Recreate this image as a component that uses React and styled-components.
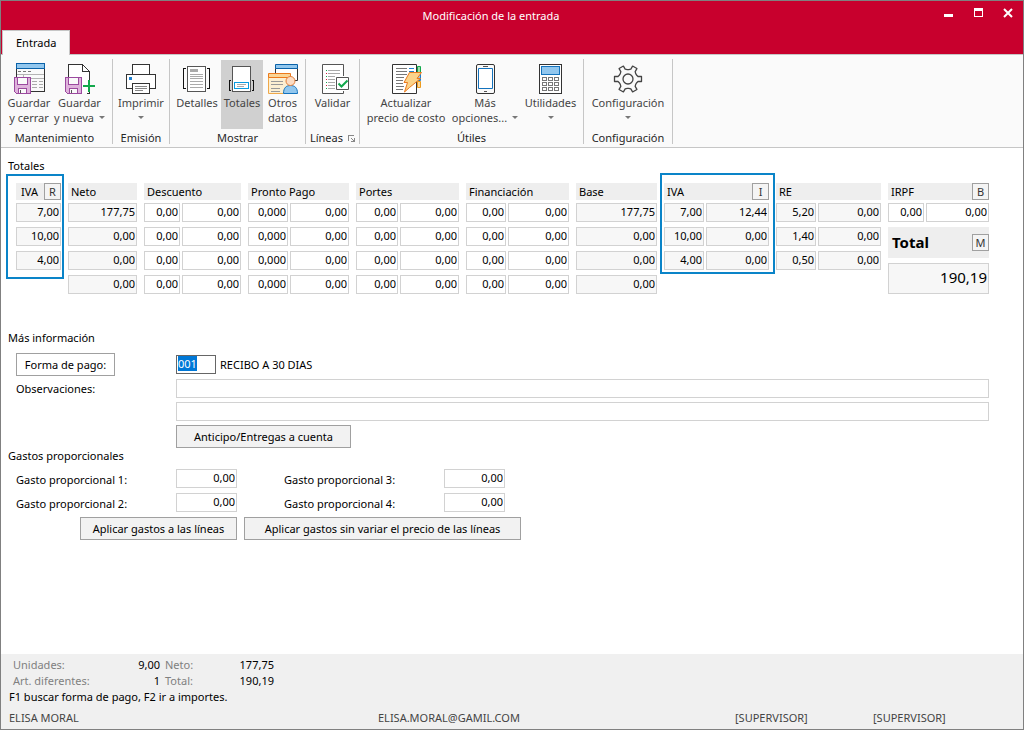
import React, { useEffect, useRef } from "react";
import styled, { createGlobalStyle, css } from "styled-components";

const Global = createGlobalStyle`
  * { box-sizing: border-box; }
  html, body { margin: 0; }
  body, button, input {
    font-family: "Noto Sans", "Open Sans", sans-serif;
    font-size: 11px;
    line-height: 15px;
    color: #000;
  }
  button, input { margin: 0; border-radius: 0; }
`;

const Window = styled.div`
  display: flex;
  flex-direction: column;
  min-height: 100vh;
  border: 1px solid #808080;
  background: #fff;
`;

/* ---------- title bar and tabs ---------- */

const TitleBar = styled.header`
  display: grid;
  align-items: center;
  height: 29px;
  background: #c8002d;
  color: #fff;
`;

const Title = styled.h1`
  grid-area: 1 / 1;
  justify-self: center;
  margin: 0 42px 0 0;
  font-size: 11px;
  font-weight: 400;
`;

const WindowButtons = styled.div`
  grid-area: 1 / 1;
  place-self: start end;
  display: flex;
`;

const WindowButton = styled.button`
  width: 30px;
  height: 24px;
  padding: 0;
  border: 0;
  background: none;
  svg { display: block; margin: 0 auto; }
`;

const TabStrip = styled.nav`
  display: flex;
  height: 25px;
  padding-left: 1px;
  background: #c8002d;
  border-bottom: 1px solid #c6c6c6;
`;

const Tab = styled.button`
  height: 25px;
  padding: 0 13px 2px;
  border: 1px solid #c6c6c6;
  border-bottom: 0;
  background: #fafafa;
`;

/* ---------- ribbon ---------- */

const Ribbon = styled.div`
  display: flex;
  height: 93px;
  padding: 4px 0 3px;
  background: #fafafa;
  border-bottom: 1px solid #c6c6c6;
`;

const RibbonGroup = styled.section`
  display: flex;
  flex-direction: column;
  justify-content: space-between;
  padding: 1px ${(p) => p.$end || 3}px 0 3px;
  border-right: 1px solid #c6c6c6;
`;

const RibbonItems = styled.div`
  display: flex;
`;

const GroupLabel = styled.h2`
  display: flex;
  align-items: center;
  justify-content: center;
  gap: 5px;
  margin: 0;
  font-size: 11px;
  font-weight: 400;
  line-height: 12px;
  color: #262626;
`;

const RibbonButton = styled.button`
  display: flex;
  flex-direction: column;
  align-items: center;
  width: ${(p) => p.$width}px;
  height: 69px;
  padding: 3px 0 0;
  border: 0;
  background: ${(p) => (p.$active ? "#d0d0d0" : "transparent")};
  color: #444;
  white-space: nowrap;
  svg { flex: none; }
`;

const ButtonLine = styled.span`
  display: flex;
  align-items: center;
  gap: 5px;
  height: 15px;
`;

const Caret = styled.i`
  border: 3px solid transparent;
  border-top-color: #777;
  border-bottom: 0;
`;

/* ---------- form ---------- */

const Content = styled.main`
  flex: 1;
  padding: 10px 34px 16px 7px;
`;

const SectionTitle = styled.h2`
  margin: 0;
  font-size: 11px;
  font-weight: 400;
  line-height: 15px;
`;

const TotalsGrid = styled.div`
  display: grid;
  grid-template-columns: 45fr 69fr 97fr 101fr 103fr 103fr 81fr 105fr 105fr 101fr;
  gap: 7px;
  align-items: start;
  padding: 10px 0 0 8px;
`;

const TotalsColumn = styled.div`
  position: relative;
  display: flex;
  flex-direction: column;
  gap: 5px;
  min-width: 0;
  ${(p) =>
    p.$frame &&
    css`
      &::after {
        content: "";
        position: absolute;
        inset: ${p.$frame};
        border: 2px solid #0a84c8;
        pointer-events: none;
      }
    `}
`;

const ColumnHeader = styled.div`
  display: flex;
  align-items: center;
  justify-content: space-between;
  height: 17px;
  margin-bottom: -2px;
  padding-left: ${(p) => p.$indent || 3}px;
  background: #eee;
`;

const KeyButton = styled.button`
  width: 17px;
  height: 17px;
  padding: 0;
  border: 1px solid #a0a0a0;
  background: #f4f4f4;
  line-height: 13px;
  color: #333;
`;

const CellRow = styled.div`
  display: flex;
  gap: 2px;
`;

const Field = styled.input`
  min-width: 0;
  width: ${(p) => (p.$width ? `${p.$width}px` : "auto")};
  flex: ${(p) => (p.$width ? "none" : "1 1 0")};
  height: 19px;
  padding: 0 1px 2px;
  border: 1px solid ${(p) => (p.$strong ? "#666" : "#d2d2d2")};
  outline: 0;
  background: ${(p) => (p.readOnly ? "#f7f7f7" : "#fff")};
  text-align: ${(p) => (p.$left ? "left" : "right")};
  &::selection { background: #0078d7; color: #fff; }
`;

const GrandTotal = styled.div`
  display: flex;
  align-items: center;
  justify-content: space-between;
  height: 31px;
  padding-left: 4px;
  background: #eee;
  font-size: 15px;
  font-weight: 700;
`;

const GrandField = styled(Field)`
  flex: none;
  width: 100%;
  height: 31px;
  padding-bottom: 4px;
  font-size: 15px;
`;

const FormRow = styled.div`
  display: grid;
  grid-template-columns: 160px 1fr;
  align-items: ${(p) => (p.$notes ? "start" : "center")};
  min-height: 20px;
  padding-left: 8px;
  label { line-height: 20px; }
`;

const InfoBlock = styled.section`
  padding-top: 36px;
`;

const InfoRows = styled.div`
  display: flex;
  flex-direction: column;
  gap: 3px;
  padding-top: 8px;
`;

const Inline = styled.div`
  display: flex;
  align-items: center;
  gap: 4px;
`;

const PushButton = styled.button`
  justify-self: start;
  width: ${(p) => p.$width}px;
  height: 23px;
  padding: 0;
  border: 1px solid #a0a0a0;
  background: ${(p) => (p.$plain ? "#fff" : "#f2f2f2")};
`;

const ExpenseGrid = styled.div`
  display: grid;
  grid-template-columns: 160px 61px 207px 61px;
  align-items: center;
  row-gap: 5px;
  padding: 6px 0 5px 8px;
`;

const ExpenseLabel = styled.label`
  padding: 2px 0 0 ${(p) => (p.$second ? 47 : 0)}px;
  white-space: nowrap;
`;

const ExpenseActions = styled.div`
  display: flex;
  gap: 7px;
  padding-left: 72px;
`;

/* ---------- status bar ---------- */

const StatusBar = styled.footer`
  padding: 3px 8px 3px;
  background: #f0f0f0;
`;

const Summary = styled.dl`
  display: grid;
  grid-template-columns: 80px 67px 60px 54px;
  margin: 0;
  padding-left: 4px;
  line-height: 16px;
  white-space: nowrap;
  dt { color: #808080; }
  dd { margin: 0; text-align: right; }
  dt:nth-of-type(even) { padding-left: 5px; }
`;

const Hint = styled.p`
  margin: 0;
  line-height: 16px;
`;

const UserLine = styled.div`
  display: grid;
  grid-template-columns: 369fr 357fr 138fr 142fr;
  padding-top: 5px;
  line-height: 16px;
  color: #444;
`;

/* ---------- icons ---------- */

const Icon = ({ children, crisp = true }) => (
  <svg width="32" height="32" viewBox="0 0 32 32" fill="none" aria-hidden="true"
    shapeRendering={crisp ? "crispEdges" : "auto"}>
    {children}
  </svg>
);

const Floppy = () => (
  <g stroke="#9b4a9f">
    <path d="M1.5 14.5h16v16h-14l-2-2z" fill="#dfb3dc" />
    <path d="M4.5 14.5h10v7h-10z" fill="#fafafa" />
    <path d="M5.5 25.5h8v5h-8z" fill="#fafafa" />
    <path d="M7.5 27v3" stroke="#555" />
  </g>
);

const SaveCloseIcon = () => (
  <Icon>
    <path d="M3.5 5.5h28v23h-28z" fill="#fafafa" stroke="#333" />
    <path d="M3.5 .5h28v5h-28z" fill="#92c7ee" stroke="#0a62a9" />
    <path d="M5 8.500h3M10 8.500h3M15 8.500h3" stroke="#777" />
    <path d="M4 11.500h27M10.500 12v4M11 15.500h20" stroke="#b4b4b4" />
    <path d="M19 18.500h5M26 18.500h4M19 21.500h5M26 21.500h4M19 24.500h5M26 24.500h4" stroke="#aaa" />
    <Floppy />
  </Icon>
);

const SaveNewIcon = () => (
  <Icon>
    <path d="M4.500 1.500h14l7 7v21h-21z" fill="#fff" />
    <path d="M4.500 14v-12.500h14l7 7v8M25.500 28v2.500h-3M18.500 1.500v7h7" stroke="#333" />
    <Floppy />
    <path d="M25 17v12M19 23h12" stroke="#12a84c" strokeWidth="2" />
  </Icon>
);

const PrintIcon = () => (
  <Icon>
    <path d="M7.500 11.500v-10h17v10" fill="#fff" stroke="#333" />
    <path d="M1.500 11.500h29v14h-29z" fill="#fff" stroke="#333" />
    <path d="M4 14h3v3h-3z" fill="#1e7fd0" />
    <path d="M7.500 20.500h17v10h-17z" fill="#fff" stroke="#333" />
    <path d="M10 23.500h12M10 25.500h12M10 27.500h8" stroke="#888" />
  </Icon>
);

const DetailsIcon = () => (
  <Icon>
    <path d="M5 5.500h-2.500v20H5M26 5.500h2.500v20H26" stroke="#111" />
    <path d="M6.500 3.500h18v25h-18z" fill="#fff" stroke="#555" />
    <path d="M9 6h8v3h-8z" fill="#aaa" />
    <path d="M9 11.500h13M9 13.500h13M9 15.500h13M9 18.500h13M9 21.500h13M9 24.500h13" stroke="#aaa" />
  </Icon>
);

const TotalsIcon = () => (
  <Icon>
    <path d="M5 17.500h-1.500v10H5M26 17.500h1.500v10H26" stroke="#111" />
    <path d="M6.500 3.500h18v25h-18z" fill="#fff" stroke="#555" />
    <path d="M8.500 19.500h14v6h-14z" fill="#fff" stroke="#0a9be0" />
    <path d="M11 21.500h9M11 23.500h7" stroke="#aaa" />
  </Icon>
);

const OtherDataIcon = () => (
  <Icon crisp={false}>
    <path d="M8.500 5.500h22v12h-22z" fill="#fff" stroke="#333" />
    <path d="M8.500 1.500h22v4h-22z" fill="#92c7ee" stroke="#0a62a9" />
    <path d="M1.500 14.500h22v16h-22z" fill="#fcefd2" />
    <path d="M1.500 14v16.500h15" stroke="#f0a94a" />
    <path d="M1.500 10.500h22v4h-22z" fill="#fad596" stroke="#ec7a1c" />
    <path d="M4 18.500h12M4 21.500h12M4 25.500h9M4 28.500h9" stroke="#999" />
    <path d="M16.500 30.500c0-6 3-8 7-8s7 2 7 8z" fill="#92c7ee" stroke="#1473bd" />
    <circle cx="23.500" cy="18" r="4.500" fill="#fbdcc4" stroke="#e27f3a" />
  </Icon>
);

const ValidateIcon = () => (
  <Icon crisp={false}>
    <path d="M5.500 1.500h21v29h-21z" fill="#fff" stroke="#555" />
    <path d="M9 7.500h1M9 13.500h1M9 19.500h1M9 25.500h1" stroke="#12a84c" />
    <path d="M9 10.500h1M9 16.500h1M9 22.500h1" stroke="#d01f3c" />
    <path d="M11 7.500h12M11 10.500h12M11 13.500h12M11 16.500h7M11 19.500h7M11 22.500h7M11 25.500h7" stroke="#aaa" />
    <path d="M18 13h14v15h-14z" fill="#fff" />
    <path d="M19.500 14.500h12v12h-12z" fill="#fff" stroke="#555" />
    <path d="M21.500 20.500l3 3 6-6" stroke="#12a84c" strokeWidth="2" />
  </Icon>
);

const UpdateIcon = () => (
  <Icon crisp={false}>
    <path d="M27.500 3.500h3v6h-3z" fill="#9fdcae" stroke="#12a84c" />
    <path d="M27.500 10.500h3v7h-3z" fill="#92c7ee" stroke="#1e7fd0" />
    <path d="M27.500 18.500h3v6h-3z" fill="#fad596" stroke="#ec9a1c" />
    <path d="M2.500 1.500h24v29h-24z" fill="#fff" stroke="#333" />
    <path d="M6 5.500h11M6 8.500h11M6 11.500h11M6 14.500h8M6 17.500h7M6 20.500h7M6 23.500h8M6 26.500h7" stroke="#777" />
    <path d="M19 5.500h5M19 8.500h5" stroke="#1e7fd0" />
    <path d="M19.500 9.500h12l-4.500 6h3.500l-11 9-5 4.500 3-9.500h-3.500z" fill="#fbd38a" stroke="#ec7a1c" />
  </Icon>
);

const PhoneIcon = () => (
  <Icon crisp={false}>
    <rect x="7.500" y="1.500" width="18" height="29" rx="1.500" fill="#fafafa" stroke="#333" />
    <path d="M9.500 5.500h14v20h-14z" fill="#fff" stroke="#1473bd" />
    <path d="M14 3.500h5M15 28.500h3" stroke="#555" />
  </Icon>
);

const CalculatorIcon = () => (
  <Icon>
    <path d="M4.500 1.500h22v29h-22z" fill="#fff" stroke="#333" />
    <path d="M6.500 3.500h18v8h-18z" fill="#92c7ee" stroke="#1473bd" />
    {[14.5, 19.5, 24.5].map((y) =>
      [7.5, 13.5, 19.5].map((x) => (
        <rect key={`${x}-${y}`} x={x} y={y} width="4" height="3" stroke="#777" />
      ))
    )}
  </Icon>
);

// Six teeth, one every 60 degrees, each given by its root and tip corners.
const gearPoints = Array.from({ length: 6 }, (_, k) => {
  const a = (k * Math.PI) / 3;
  return [[8.5, -4], [10, -2.5], [13.5, -2.5], [13.5, 2.5], [10, 2.5], [8.5, 4]].map(
    ([x, y]) =>
      `${(16 + x * Math.cos(a) - y * Math.sin(a)).toFixed(2)},${(16 + x * Math.sin(a) + y * Math.cos(a)).toFixed(2)}`
  );
})
  .flat()
  .join(" ");

const GearIcon = () => (
  <Icon crisp={false}>
    <polygon points={gearPoints} stroke="#444" strokeWidth="1.300" strokeLinejoin="round" />
    <circle cx="16" cy="16" r="5" stroke="#444" strokeWidth="1.300" />
  </Icon>
);

const LauncherIcon = () => (
  <svg width="7" height="7" viewBox="0 0 7 7" fill="none" stroke="#888" shapeRendering="crispEdges" aria-hidden="true">
    <path d="M.5 6V.5H6M3 3l3 3M6.500 3v3.500H3" />
  </svg>
);

/* ---------- data ---------- */

const ribbon = [
  { label: "Mantenimiento", end: 7, items: [
    { width: 50, icon: SaveCloseIcon, lines: ["Guardar", "y cerrar"] },
    { width: 51, icon: SaveNewIcon, lines: ["Guardar", "y nueva"], menu: true },
  ] },
  { label: "Emisión", items: [{ width: 50, icon: PrintIcon, lines: ["Imprimir", ""], menu: true }] },
  { label: "Mostrar", items: [
    { width: 48, icon: DetailsIcon, lines: ["Detalles"] },
    { width: 42, icon: TotalsIcon, lines: ["Totales"], active: true },
    { width: 39, icon: OtherDataIcon, lines: ["Otros", "datos"] },
  ] },
  { label: "Líneas", launcher: true, items: [{ width: 47, icon: ValidateIcon, lines: ["Validar"] }] },
  { label: "Útiles", items: [
    { width: 86, icon: UpdateIcon, lines: ["Actualizar", "precio de costo"] },
    { width: 72, icon: PhoneIcon, lines: ["Más", "opciones..."], menu: true },
    { width: 59, icon: CalculatorIcon, lines: ["Utilidades", ""], menu: true },
  ] },
  { label: "Configuración", items: [{ width: 82, icon: GearIcon, lines: ["Configuración", ""], menu: true }] },
];

const zeros = (first, n) => Array.from({ length: n }, () => [first, "0,00"]);

const columns = [
  { name: "IVA", key: "R", indent: 5, readOnly: true, rows: [["7,00"], ["10,00"], ["4,00"]], frame: "-9px -3px -9px -10px" },
  { name: "Neto", readOnly: true, rows: [["177,75"], ["0,00"], ["0,00"], ["0,00"]] },
  { name: "Descuento", first: 36, rows: zeros("0,00", 4) },
  { name: "Pronto Pago", first: 40, rows: zeros("0,000", 4) },
  { name: "Portes", first: 42, rows: zeros("0,00", 4) },
  { name: "Financiación", first: 40, rows: zeros("0,00", 4) },
  { name: "Base", readOnly: true, rows: [["177,75"], ["0,00"], ["0,00"], ["0,00"]] },
  { name: "IVA", key: "I", first: 40, readOnly: true, rows: [["7,00", "12,44"], ["10,00", "0,00"], ["4,00", "0,00"]], frame: "-10px -6px -4px -4px" },
  { name: "RE", first: 40, readOnly: true, rows: [["5,20", "0,00"], ["1,40", "0,00"], ["0,50", "0,00"]] },
  { name: "IRPF", key: "B", first: 36, rows: [["0,00", "0,00"]], total: "190,19" },
];

const expenses = [
  [1, 3],
  [2, 4],
];

/* ---------- parts ---------- */

function RibbonItem({ item }) {
  const Glyph = item.icon;
  return (
    <RibbonButton type="button" $width={item.width} $active={item.active} aria-pressed={item.active}>
      <Glyph />
      {item.lines.map((line, i) => (
        <ButtonLine key={i}>
          {line}
          {item.menu && i === item.lines.length - 1 && <Caret />}
        </ButtonLine>
      ))}
    </RibbonButton>
  );
}

function Totals({ column }) {
  return (
    <TotalsColumn $frame={column.frame}>
      <ColumnHeader $indent={column.indent}>
        {column.name}
        {column.key && <KeyButton type="button">{column.key}</KeyButton>}
      </ColumnHeader>
      {column.rows.map((row, r) => (
        <CellRow key={r}>
          {row.map((value, c) => (
            <Field
              key={c}
              $width={c === 0 ? column.first : undefined}
              readOnly={column.readOnly}
              defaultValue={value}
              aria-label={`${column.name} ${r + 1}.${c + 1}`}
            />
          ))}
        </CellRow>
      ))}
      {column.total && (
        <>
          <GrandTotal>
            Total
            <KeyButton type="button">M</KeyButton>
          </GrandTotal>
          <GrandField readOnly defaultValue={column.total} aria-label="Total" />
        </>
      )}
    </TotalsColumn>
  );
}

export default function App() {
  const payment = useRef(null);
  useEffect(() => {
    payment.current.focus({ preventScroll: true });
    payment.current.select();
  }, []);

  return (
    <Window>
      <Global />
      <TitleBar>
        <Title>Modificación de la entrada</Title>
        <WindowButtons>
          <WindowButton type="button" aria-label="Minimizar">
            <svg width="10" height="10" viewBox="0 0 10 10"><path d="M1 6h9v3H1z" fill="#fff" /></svg>
          </WindowButton>
          <WindowButton type="button" aria-label="Maximizar">
            <svg width="10" height="10" viewBox="0 0 10 10"><path d="M1 0h9v9H1zM2 3v5h7V3z" fill="#fff" fillRule="evenodd" /></svg>
          </WindowButton>
          <WindowButton type="button" aria-label="Cerrar">
            <svg width="10" height="10" viewBox="0 0 10 10"><path d="M1 1l8 8M9 1l-8 8" stroke="#fff" strokeWidth="2" /></svg>
          </WindowButton>
        </WindowButtons>
      </TitleBar>
      <TabStrip>
        <Tab type="button">Entrada</Tab>
      </TabStrip>

      <Ribbon>
        {ribbon.map((group) => (
          <RibbonGroup key={group.label} $end={group.end}>
            <RibbonItems>
              {group.items.map((item, i) => <RibbonItem key={i} item={item} />)}
            </RibbonItems>
            <GroupLabel>
              {group.label}
              {group.launcher && <LauncherIcon />}
            </GroupLabel>
          </RibbonGroup>
        ))}
      </Ribbon>

      <Content>
        <SectionTitle>Totales</SectionTitle>
        <TotalsGrid>
          {columns.map((column, i) => <Totals key={i} column={column} />)}
        </TotalsGrid>

        <InfoBlock>
          <SectionTitle>Más información</SectionTitle>
          <InfoRows>
            <FormRow>
              <PushButton type="button" $width={99} $plain>Forma de pago:</PushButton>
              <Inline>
                <Field ref={payment} $width={40} $left $strong defaultValue="001" aria-label="Forma de pago" />
                RECIBO A 30 DIAS
              </Inline>
            </FormRow>
            <FormRow $notes>
              <label htmlFor="notes-1">Observaciones:</label>
              <Inline><Field id="notes-1" $left /></Inline>
            </FormRow>
            <FormRow $notes>
              <span />
              <Inline><Field $left aria-label="Observaciones, línea 2" /></Inline>
            </FormRow>
            <FormRow>
              <span />
              <PushButton type="button" $width={175}>Anticipo/Entregas a cuenta</PushButton>
            </FormRow>
          </InfoRows>
        </InfoBlock>

        <SectionTitle>Gastos proporcionales</SectionTitle>
        <ExpenseGrid>
          {expenses.map((pair) =>
            pair.map((n, i) => (
              <React.Fragment key={n}>
                <ExpenseLabel htmlFor={`expense-${n}`} $second={i === 1}>Gasto proporcional {n}:</ExpenseLabel>
                <Field id={`expense-${n}`} $width={61} defaultValue="0,00" />
              </React.Fragment>
            ))
          )}
        </ExpenseGrid>
        <ExpenseActions>
          <PushButton type="button" $width={157}>Aplicar gastos a las líneas</PushButton>
          <PushButton type="button" $width={277}>Aplicar gastos sin variar el precio de las líneas</PushButton>
        </ExpenseActions>
      </Content>

      <StatusBar>
        <Summary>
          <dt>Unidades:</dt><dd>9,00</dd>
          <dt>Neto:</dt><dd>177,75</dd>
          <dt>Art. diferentes:</dt><dd>1</dd>
          <dt>Total:</dt><dd>190,19</dd>
        </Summary>
        <Hint>F1 buscar forma de pago, F2 ir a importes.</Hint>
        <UserLine>
          <span>ELISA MORAL</span>
          <span>ELISA.MORAL@GAMIL.COM</span>
          <span>[SUPERVISOR]</span>
          <span>[SUPERVISOR]</span>
        </UserLine>
      </StatusBar>
    </Window>
  );
}
